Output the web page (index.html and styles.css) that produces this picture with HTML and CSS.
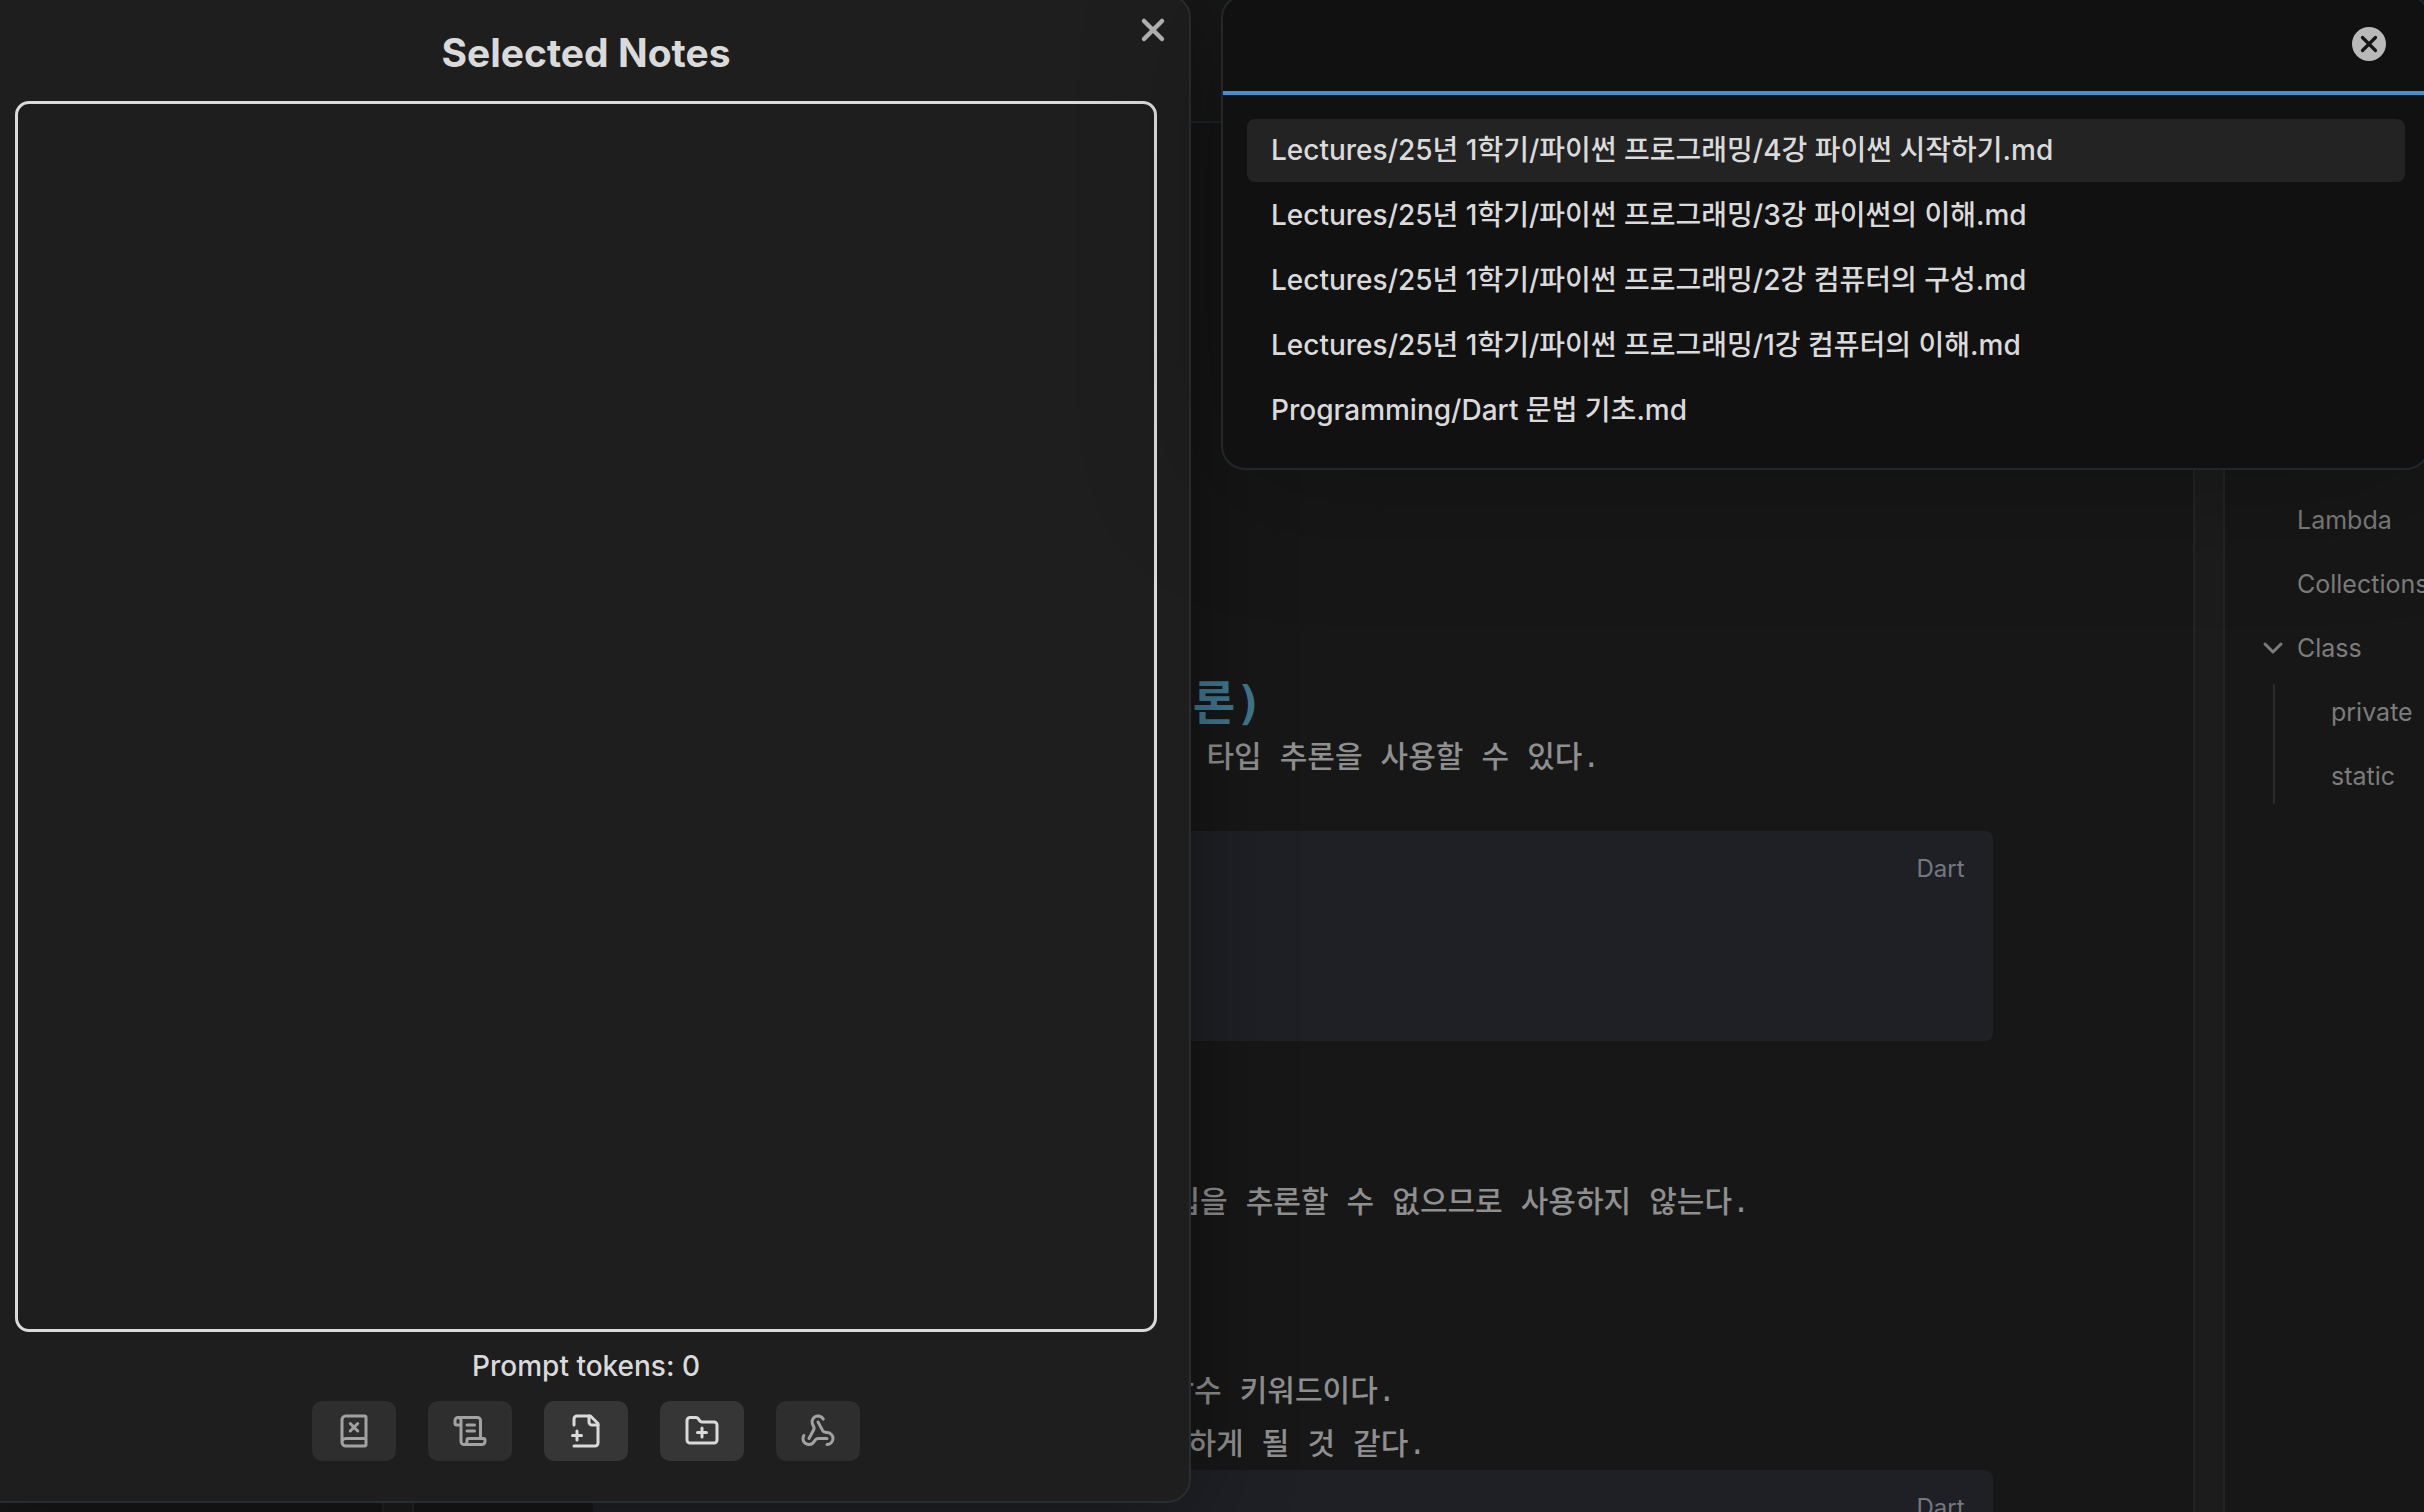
FILE: index.html
```html
<!DOCTYPE html>
<html lang="ko">
<head>
    <meta charset="UTF-8">
    <meta name="viewport" content="width=device-width, initial-scale=1.0">
    <title>Selected Notes</title>
    <link rel="stylesheet" href="styles.css">
</head>
<body>
    <div class="workspace">
        <div class="left-pane"></div>
        <div class="divider"></div>
        <main class="editor">
            <div class="editor-header"></div>
            <div class="note">
                <h2 class="note-title">추론)</h2>
                <p class="line line-first">타입 추론을 사용할 수 있다.</p>
                <div class="code-block"><span class="lang">Dart</span></div>
                <p class="line line-infer">입을 추론할 수 없으므로 사용하지 않는다.</p>
                <p class="line line-const">상수 키워드이다.</p>
                <p class="line line-use">하게 될 것 같다.</p>
                <div class="code-block code-block-next"><span class="lang">Dart</span></div>
            </div>
        </main>
        <div class="divider"></div>
        <nav class="outline">
            <a class="outline-item" href="#">Lambda</a>
            <a class="outline-item" href="#">Collections</a>
            <a class="outline-item" href="#">
                <svg class="chevron" viewBox="0 0 24 24"><path d="m4 8 8 8 8-8"/></svg>Class
            </a>
            <div class="outline-children">
                <a class="outline-item" href="#">private</a>
                <a class="outline-item" href="#">static</a>
            </div>
        </nav>
    </div>

    <section class="notes-modal" aria-labelledby="notes-title">
        <button class="close-btn" aria-label="Close">
            <svg class="icon" viewBox="0 0 24 24"><path d="M18 6 6 18M6 6l12 12"/></svg>
        </button>
        <h1 class="notes-title" id="notes-title">Selected Notes</h1>
        <div class="notes-list"></div>
        <p class="tokens">Prompt tokens: 0</p>
        <div class="actions">
            <button class="action-btn" aria-label="Clear notes" disabled>
                <svg class="icon" viewBox="0 0 24 24"><path d="m14.5 7-5 5M4 19.5v-15A2.5 2.5 0 0 1 6.5 2H19a1 1 0 0 1 1 1v18a1 1 0 0 1-1 1H6.5a1 1 0 0 1 0-5H20M9.5 7l5 5"/></svg>
            </button>
            <button class="action-btn" aria-label="Copy prompt" disabled>
                <svg class="icon" viewBox="0 0 24 24"><path d="M15 12h-5M15 8h-5M19 17V5a2 2 0 0 0-2-2H4"/><path d="M8 21h12a2 2 0 0 0 2-2v-1a1 1 0 0 0-1-1H11a1 1 0 0 0-1 1v1a2 2 0 1 1-4 0V5a2 2 0 1 0-4 0v2a1 1 0 0 0 1 1h3"/></svg>
            </button>
            <button class="action-btn" aria-label="Add note">
                <svg class="icon" viewBox="0 0 24 24"><path d="M14 2v4a2 2 0 0 0 2 2h4"/><path d="M4 22h14a2 2 0 0 0 2-2V7l-5-5H6a2 2 0 0 0-2 2v4M3 15h6M6 12v6"/></svg>
            </button>
            <button class="action-btn" aria-label="Add folder">
                <svg class="icon" viewBox="0 0 24 24"><path d="M12 10v6M9 13h6M20 20a2 2 0 0 0 2-2V8a2 2 0 0 0-2-2h-7.9a2 2 0 0 1-1.69-.9L9.6 3.9A2 2 0 0 0 7.93 3H4a2 2 0 0 0-2 2v13a2 2 0 0 0 2 2Z"/></svg>
            </button>
            <button class="action-btn" aria-label="Send" disabled>
                <svg class="icon" viewBox="0 0 24 24"><path d="M18 16.98h-5.99c-1.1 0-1.95.94-2.48 1.9A4 4 0 0 1 2 17c.01-.7.2-1.4.57-2"/><path d="m6 17 3.13-5.78c.53-.97.1-2.18-.5-3.1a4 4 0 1 1 6.89-4.06"/><path d="m12 6 3.13 5.73C15.66 12.7 16.9 13 18 13a4 4 0 0 1 0 8"/></svg>
            </button>
        </div>
    </section>

    <section class="prompt">
        <div class="prompt-bar">
            <input class="prompt-input" type="text" aria-label="Search notes">
            <button class="clear-btn" aria-label="Clear search">
                <svg class="clear-icon" viewBox="0 0 24 24"><path d="M18 6 6 18M6 6l12 12"/></svg>
            </button>
        </div>
        <ul class="results">
            <li class="result selected">Lectures/25년 1학기/파이썬 프로그래밍/4강 파이썬 시작하기.md</li>
            <li class="result">Lectures/25년 1학기/파이썬 프로그래밍/3강 파이썬의 이해.md</li>
            <li class="result">Lectures/25년 1학기/파이썬 프로그래밍/2강 컴퓨터의 구성.md</li>
            <li class="result">Lectures/25년 1학기/파이썬 프로그래밍/1강 컴퓨터의 이해.md</li>
            <li class="result">Programming/Dart 문법 기초.md</li>
        </ul>
    </section>
</body>
</html>
```
FILE: styles.css
```css
* {
    box-sizing: border-box;
}

body {
    margin: 0;
    height: 100vh;
    overflow: hidden;
    position: relative;
    background-color: #171717;
    color: #dadada;
    font-family: Inter, "Noto Sans CJK KR", sans-serif;
    font-size: 28px;
    font-weight: 500;
}

h1, h2, p, ul {
    margin: 0;
    padding: 0;
}

button {
    display: flex;
    align-items: center;
    justify-content: center;
    padding: 0;
    border: none;
    background: none;
    color: inherit;
    cursor: pointer;
}

svg {
    fill: none;
    stroke: currentColor;
    stroke-width: 2;
    stroke-linecap: round;
    stroke-linejoin: round;
}

.icon {
    width: 36px;
    height: 36px;
}

/* workspace behind the modals */
.workspace {
    display: grid;
    grid-template-columns: 382px 32px 1fr 32px 199px;
    height: 100%;
    overflow: hidden;
}

.divider {
    background-color: #1c1c1c;
    border-left: 2px solid #212529;
    border-right: 2px solid #212529;
}

.editor {
    min-width: 0;
    padding-right: 22px;
}

.editor-header {
    height: 123px;
    background-color: #191919;
    border-bottom: 2px solid #22272a;
}

.note {
    max-width: 1400px;
    margin: 0 auto;
    padding-top: 554px;
    font-family: "DejaVu Sans Mono", "Noto Sans CJK KR", monospace;
    font-size: 30px;
    color: #8f8f8f;
    white-space: nowrap;
}

.note-title {
    margin-left: 558px;
    line-height: 53px;
    font-size: 46px;
    font-weight: bold;
    color: #407790;
}

.line {
    line-height: 53px;
}

.line-first {
    margin-left: 614px;
}

.line-infer {
    margin: 134px 0 136px 580px;
}

.line-const {
    margin-left: 574px;
}

.line-use {
    margin-left: 596px;
}

.code-block {
    display: flex;
    justify-content: flex-end;
    height: 210px;
    margin-top: 48px;
    padding: 22px 28px;
    border-radius: 8px;
    background-color: #1f2025;
}

.code-block-next {
    margin-top: 0;
}

.lang {
    font-family: Inter, sans-serif;
    font-size: 24px;
    font-weight: normal;
    line-height: 32px;
    color: #747980;
}

.outline {
    padding-top: 488px;
    overflow: hidden;
    font-size: 25px;
    font-weight: normal;
}

.outline-item {
    display: flex;
    align-items: center;
    position: relative;
    height: 64px;
    padding-left: 72px;
    color: #7c7c7c;
    text-decoration: none;
}

.chevron {
    position: absolute;
    left: 36px;
    width: 24px;
    height: 24px;
    stroke-width: 3;
}

.outline-children {
    display: flex;
    flex-direction: column;
    gap: 8px;
    margin: 4px 0 0 48px;
    border-left: 2px solid #2b2b2b;
}

.outline-children .outline-item {
    height: 56px;
    padding-left: 56px;
}

/* selected notes modal */
.notes-modal {
    position: absolute;
    top: -6px;
    bottom: 9px;
    left: -24px;
    width: calc(50% + 3px);
    display: flex;
    flex-direction: column;
    padding: 32px 32px 40px 37px;
    border: 2px solid #292d30;
    border-radius: 24px;
    background-color: #1e1e1e;
    box-shadow: 0 4px 100px rgba(0, 0, 0, 0.4);
}

.close-btn {
    position: absolute;
    top: 16px;
    right: 18px;
    color: #b3b3b3;
}

.close-btn .icon,
.clear-icon {
    stroke-width: 3;
}

.notes-title {
    margin-bottom: 23px;
    line-height: 50px;
    font-size: 39px;
    font-weight: bold;
    text-align: center;
}

.notes-list {
    flex: 1;
    border: 3px solid #dadada;
    border-radius: 14px;
}

.tokens {
    margin: 12px 0;
    line-height: 45px;
    text-align: center;
}

.actions {
    display: flex;
    justify-content: center;
    gap: 32px;
}

.action-btn {
    width: 84px;
    height: 60px;
    border-radius: 10px;
    background-color: #363636;
}

.action-btn:disabled {
    opacity: 0.7;
}

/* search prompt */
.prompt {
    position: absolute;
    top: -6px;
    left: calc(50% + 9px);
    right: -6px;
    border: 2px solid #22272a;
    border-radius: 24px;
    background-color: #111111;
    box-shadow: 0 10px 140px rgba(0, 0, 0, 0.25);
}

.prompt-bar {
    display: flex;
    align-items: center;
    height: 99px;
    padding: 0 42px 0 32px;
    border-bottom: 4px solid #4a8fc9;
}

.prompt-input {
    flex: 1;
    border: none;
    outline: none;
    background: none;
    color: inherit;
    font: inherit;
}

.clear-btn {
    width: 34px;
    height: 34px;
    border-radius: 50%;
    background-color: #b9b9b9;
    color: #151515;
}

.clear-icon {
    width: 26px;
    height: 26px;
}

.results {
    display: flex;
    flex-direction: column;
    gap: 2px;
    padding: 24px 23px 26px 24px;
    list-style: none;
    white-space: nowrap;
}

.result {
    height: 63px;
    line-height: 63px;
    padding: 0 24px;
    border-radius: 8px;
}

.selected {
    background-color: #232323;
}
```
